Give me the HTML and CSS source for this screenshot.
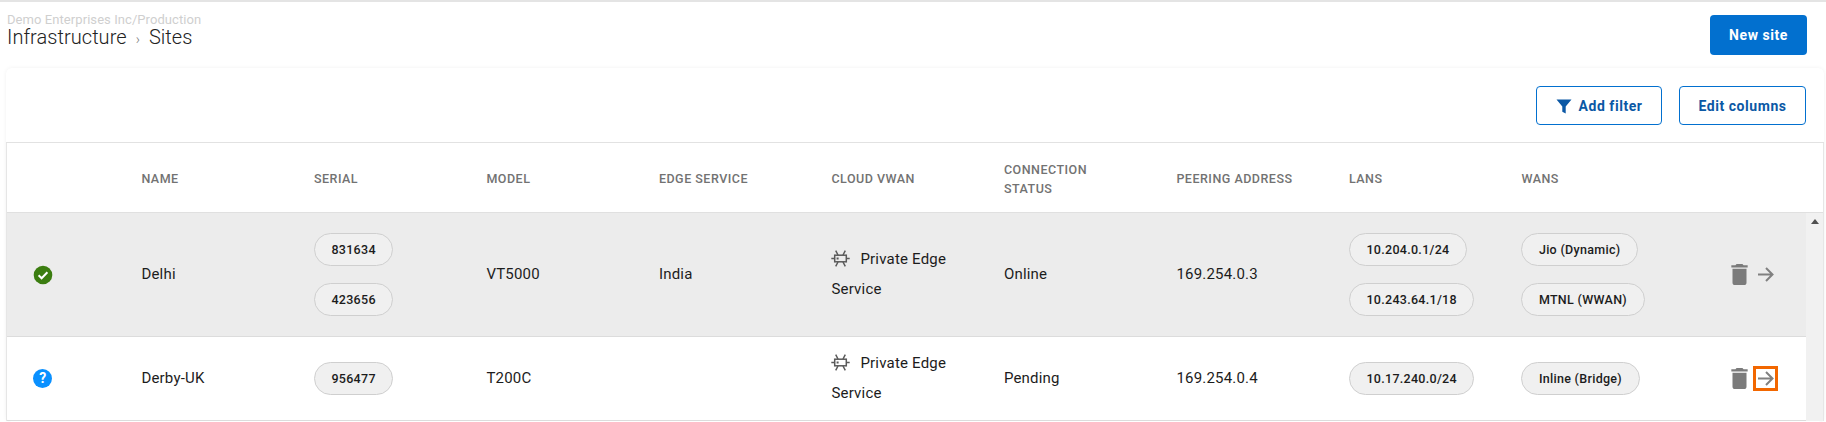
FILE: index.html
```html
<!DOCTYPE html>
<html lang="en">
<head>
<meta charset="utf-8">
<title>Sites</title>
<link rel="stylesheet" href="styles.css">
</head>
<body>
<div class="page">
  <header class="top">
    <div class="crumbs">
      <div class="org">Demo Enterprises Inc/Production</div>
      <h1 class="title">Infrastructure<span class="sep">›</span>Sites</h1>
    </div>
    <button class="btn primary">New site</button>
  </header>
  <section class="card">
    <div class="toolbar">
      <button class="btn outline filter">
        <svg class="funnel" viewBox="0 0 16 16" width="16" height="16"><path d="M.5 1.5h15L9.7 8.4V15.5l-3.4-1.7V8.4z"/></svg>Add filter
      </button>
      <button class="btn outline columns">Edit columns</button>
    </div>
    <div class="table">
      <div class="row head">
        <div></div>
        <div>Name</div>
        <div>Serial</div>
        <div>Model</div>
        <div>Edge service</div>
        <div>Cloud VWAN</div>
        <div class="wrap">Connection status</div>
        <div>Peering address</div>
        <div>LANs</div>
        <div>WANs</div>
        <div></div>
      </div>
      <div class="body">
        <div class="rows">
          <div class="row data selected">
            <div class="status"><svg viewBox="0 0 20 20" width="20" height="20"><circle cx="10" cy="10" r="9.3" fill="#3b7d10"/><path d="M5.6 10.3l3 3 5.8-6" fill="none" stroke="#fff" stroke-width="2"/></svg></div>
            <div class="text">Delhi</div>
            <div class="chips"><span class="chip">831634</span><span class="chip">423656</span></div>
            <div class="text">VT5000</div>
            <div class="text">India</div>
            <div class="text cloud"><svg class="chipicon" viewBox="0 0 19 17" width="19" height="17"><use href="#edge"/></svg>Private Edge Service</div>
            <div class="text">Online</div>
            <div class="text">169.254.0.3</div>
            <div class="chips"><span class="chip">10.204.0.1/24</span><span class="chip">10.243.64.1/18</span></div>
            <div class="chips"><span class="chip">Jio (Dynamic)</span><span class="chip">MTNL (WWAN)</span></div>
            <div class="actions">
              <svg class="trash" viewBox="5 3 14 18" width="17" height="21"><path d="M6 19c0 1.1.9 2 2 2h8c1.1 0 2-.9 2-2V7H6v12zM19 4h-3.5l-1-1h-5l-1 1H5v2h14V4z"/></svg>
              <span class="go"><svg viewBox="0 0 19 19" width="19" height="19"><path d="M2 9.5h14.5M10 3l6.5 6.5L10 16" fill="none" stroke="#808080" stroke-width="2"/></svg></span>
            </div>
          </div>
          <div class="row data">
            <div class="status"><span class="help">?</span></div>
            <div class="text">Derby-UK</div>
            <div class="chips"><span class="chip">956477</span></div>
            <div class="text">T200C</div>
            <div></div>
            <div class="text cloud"><svg class="chipicon" viewBox="0 0 19 17" width="19" height="17"><use href="#edge"/></svg>Private Edge Service</div>
            <div class="text">Pending</div>
            <div class="text">169.254.0.4</div>
            <div class="chips"><span class="chip">10.17.240.0/24</span></div>
            <div class="chips"><span class="chip">Inline (Bridge)</span></div>
            <div class="actions">
              <svg class="trash" viewBox="5 3 14 18" width="17" height="21"><path d="M6 19c0 1.1.9 2 2 2h8c1.1 0 2-.9 2-2V7H6v12zM19 4h-3.5l-1-1h-5l-1 1H5v2h14V4z"/></svg>
              <span class="go marked"><svg viewBox="0 0 19 19" width="19" height="19"><path d="M2 9.5h14.5M10 3l6.5 6.5L10 16" fill="none" stroke="#808080" stroke-width="2"/></svg></span>
            </div>
          </div>
        </div>
        <div class="scrollbar"><span class="up"></span></div>
      </div>
    </div>
  </section>
</div>
<svg width="0" height="0" class="defs">
  <symbol id="edge" viewBox="0 0 19 17">
    <g fill="none" stroke="#5a5a5a" stroke-width="1.5">
      <rect x="3.7" y="5.2" width="11.6" height="6.6"/>
      <path d="M0.3 8.5h3.4M15.3 8.5h3.4M7 5L4.7 .6M12 5L14.3 .6M7 12L4.7 16.4M12 12L14.3 16.4"/>
    </g>
    <rect x="5.6" y="7.5" width="2" height="2" fill="#5a5a5a"/>
  </symbol>
</svg>
</body>
</html>
```
FILE: styles.css
```css
* { box-sizing: border-box; }
html, body { margin: 0; height: 422px; overflow: hidden; background: #fff; }
body { font-family: Roboto, "Liberation Sans", sans-serif; color: #1c1c1c; }
.defs { position: absolute; }
.page { border-top: 2px solid #e4e4e4; height: 422px; padding: 0 2px 0 6px; }
.top { display: flex; justify-content: space-between; height: 66px; padding: 11px 17px 0 1px; }
.org { font-size: 13px; line-height: 14px; letter-spacing: .07px; color: #cfcfcf; }
.title { margin: 0; font-size: 20px; font-weight: 300; line-height: 20px; letter-spacing: .05px; color: #222; }
.sep { font-size: 14px; color: #777; margin: 0 9px; }
.btn { font-family: inherit; font-size: 14px; font-weight: 700; letter-spacing: .55px; border-radius: 4px; cursor: pointer; }
.primary { width: 97px; height: 40px; margin-top: 2px; background: #0270cf; color: #fff; border: 0; }
.outline { height: 39px; background: #fff; color: #0b58a5; border: 1px solid #0270cf; display: flex; align-items: center; justify-content: center; }
.filter { width: 126px; }
.columns { width: 127px; }
.funnel { fill: #0b58a5; margin-right: 7px; }
.card { border-radius: 6px; box-shadow: 0 0 4px rgba(0,0,0,.06); height: 354px; background: #fff; }
.toolbar { display: flex; justify-content: flex-end; gap: 17px; height: 75px; padding: 18px 18px 0 0; border-bottom: 1px solid #e2e2e2; }
.table { border-left: 1px solid #e6e6e6; border-right: 1px solid #e6e6e6; }
.row { display: grid; grid-template-columns: 134.4px repeat(9, 172.5px) 1fr; align-items: center; }
.head { height: 70px; padding-top: 2px; font-size: 12.5px; font-weight: 500; line-height: 19px; letter-spacing: .5px; color: #727272; text-transform: uppercase; border-bottom: 1px solid #e0e0e0; }
.wrap { max-width: 105px; }
.body { display: flex; }
.rows { flex: 1; min-width: 0; }
.data { font-size: 15px; letter-spacing: .2px; border-bottom: 1px solid #dcdcdc; }
.text { padding-bottom: 2px; }
.selected { height: 124px; background: #ececec; }
.data:not(.selected) { height: 84px; }
.status { display: flex; justify-content: center; padding-right: 62.5px; }
.help { width: 19px; height: 19px; border-radius: 50%; background: #0a90ff; color: #fff; font-size: 14px; font-weight: 700; line-height: 19px; text-align: center; }
.chips { display: flex; flex-direction: column; align-items: flex-start; gap: 17px; }
.chip { height: 33px; padding: 0 16.5px; border: 1px solid #cfcfcf; border-radius: 17px; background: #f0f0f0; font-size: 12.5px; font-weight: 500; line-height: 31px; letter-spacing: .3px; white-space: nowrap; }
.cloud { line-height: 30px; padding-right: 28px; }
.chipicon { vertical-align: -3px; margin-right: 10px; }
.actions { display: flex; align-items: center; gap: 8px; padding-left: 37px; }
.trash { fill: #7b7b7b; }
.go { display: flex; }
.marked { outline: 3px solid #f26700; }
.scrollbar { width: 17px; background: #f1f1f1; display: flex; justify-content: center; padding-top: 6px; }
.up { width: 0; height: 0; border: 4px solid transparent; border-top: 0; border-bottom: 5px solid #505050; }
```
